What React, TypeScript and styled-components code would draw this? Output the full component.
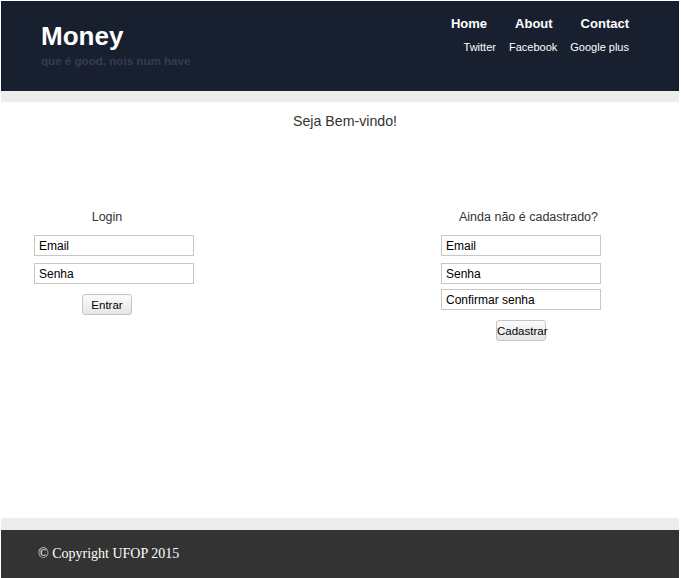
import React from "react";
import styled, { createGlobalStyle } from "styled-components";

const Global = createGlobalStyle`
  html, body { margin: 0; padding: 0; background: #ffffff; }
  body { padding: 1px; font-family: "Liberation Sans", Arial, sans-serif; }
  * { box-sizing: border-box; }
`;

const Page = styled.div`
  width: 678px;
  background: #ececec;
  display: flex;
  flex-direction: column;
`;

const Header = styled.header`
  height: 90px;
  background: #181f2f;
  display: flex;
  justify-content: space-between;
  padding: 0 50px 0 40px;
`;

const Brand = styled.div`
  display: flex;
  flex-direction: column;
  padding-top: 20px;
`;

const Logo = styled.h1`
  margin: 0;
  font-size: 26px;
  line-height: 30px;
  font-weight: bold;
  color: #ffffff;
`;

const Tagline = styled.div`
  font-size: 11.6px;
  font-weight: bold;
  color: #343d51;
  line-height: 14px;
  margin-top: 3px;
`;

const Nav = styled.nav`
  display: flex;
  flex-direction: column;
  align-items: flex-end;
  padding-top: 15px;
`;

const MainLinks = styled.div`
  display: flex;
  gap: 28px;
`;

const MainLink = styled.a`
  font-size: 13px;
  font-weight: bold;
  line-height: 16px;
  color: #ffffff;
  text-decoration: none;
`;

const SocialLinks = styled.div`
  display: flex;
  gap: 13px;
  margin-top: 8px;
`;

const SocialLink = styled.a`
  font-size: 11px;
  line-height: 14px;
  color: #ffffff;
  text-decoration: none;
`;

const Main = styled.main`
  margin-top: 11px;
  height: 416px;
  background: #ffffff;
  display: flex;
  flex-direction: column;
`;

const Welcome = styled.h2`
  margin: 0;
  padding: 11px 0 0 10px;
  text-align: center;
  font-size: 14.2px;
  font-weight: normal;
  line-height: 17px;
  color: #333333;
`;

const Forms = styled.div`
  display: flex;
  justify-content: space-between;
  padding: 79px 78px 0 33px;
`;

const FormColumn = styled.form<{ $width: number }>`
  width: ${(p) => p.$width}px;
  display: flex;
  flex-direction: column;
  align-items: center;
`;

const FormTitle = styled.h3<{ $shift: number }>`
  margin: 0 0 10px;
  padding-left: ${(p) => p.$shift}px;
  font-size: 12.5px;
  font-weight: normal;
  line-height: 16px;
  color: #333333;
`;

const Field = styled.input<{ $gap: number }>`
  align-self: flex-start;
  width: 160px;
  height: 21px;
  margin: ${(p) => p.$gap}px 0 0;
  padding: 0 4px;
  border: 1px solid #c6c6c6;
  font-family: "Liberation Sans", Arial, sans-serif;
  font-size: 12px;
  color: #000000;
  outline: none;
  &::placeholder { color: #000000; opacity: 1; }
`;

const Button = styled.button`
  margin-top: 10px;
  width: 50px;
  height: 21px;
  padding: 0;
  border: 1px solid #c4c4c4;
  border-radius: 3px;
  background: linear-gradient(#fbfbfb, #e6e6e6);
  font-family: "Liberation Sans", Arial, sans-serif;
  font-size: 11.5px;
  color: #000000;
`;

const Footer = styled.footer`
  margin-top: 12px;
  height: 48px;
  background: #333333;
  display: flex;
  align-items: center;
  padding-left: 37px;
  font-family: "Liberation Serif", "Times New Roman", serif;
  font-size: 14px;
  color: #ffffff;
`;

export default function App() {
  return (
    <>
      <Global />
      <Page>
        <Header>
          <Brand>
            <Logo>Money</Logo>
            <Tagline>que é good, nois num have</Tagline>
          </Brand>
          <Nav>
            <MainLinks>
              <MainLink href="#">Home</MainLink>
              <MainLink href="#">About</MainLink>
              <MainLink href="#">Contact</MainLink>
            </MainLinks>
            <SocialLinks>
              <SocialLink href="#">Twitter</SocialLink>
              <SocialLink href="#">Facebook</SocialLink>
              <SocialLink href="#">Google plus</SocialLink>
            </SocialLinks>
          </Nav>
        </Header>
        <Main>
          <Welcome>Seja Bem-vindo!</Welcome>
          <Forms>
            <FormColumn $width={146}>
              <FormTitle $shift={0}>Login</FormTitle>
              <Field $gap={0} placeholder="Email" />
              <Field $gap={7} type="password" placeholder="Senha" />
              <Button type="button">Entrar</Button>
            </FormColumn>
            <FormColumn $width={160}>
              <FormTitle $shift={15}>Ainda não é cadastrado?</FormTitle>
              <Field $gap={0} placeholder="Email" />
              <Field $gap={7} type="password" placeholder="Senha" />
              <Field $gap={5} type="password" placeholder="Confirmar senha" />
              <Button type="button">Cadastrar</Button>
            </FormColumn>
          </Forms>
        </Main>
        <Footer>© Copyright UFOP 2015</Footer>
      </Page>
    </>
  );
}
